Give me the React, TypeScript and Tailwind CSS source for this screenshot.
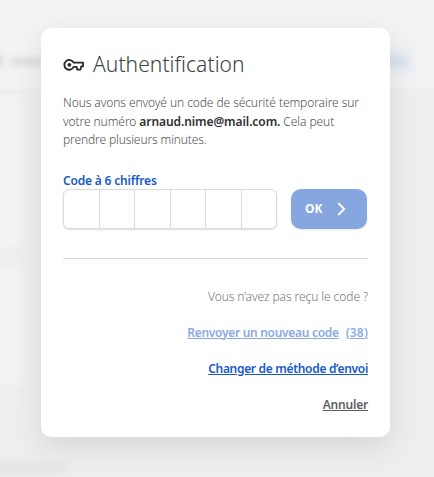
import type { ReactNode } from "react";

function KeyIcon() {
  return (
    <svg className="h-[14px] w-[21px] shrink-0" viewBox="0 0 21 14" fill="none" stroke="#292929" strokeWidth="1.8" strokeLinejoin="round">
      <path d="M10.6 4.6H20V8.4H18.2L17.5 11.6H14.2L13.7 8.9H10.7A4.9 4.9 0 1 1 10.6 4.6Z" />
      <circle cx="6.4" cy="6.8" r="1.9" fill="#292929" stroke="none" />
    </svg>
  );
}

function Backdrop() {
  return (
    <div className="absolute inset-0 overflow-hidden bg-[#eeeeee]">
      <div className="absolute inset-x-0 top-0 h-[89px] bg-[#f3f3f3]" />
      <div className="absolute -left-4 top-[95px] h-[152px] w-[37px] bg-[#f3f3f3] blur-[3px]" />
      <div className="absolute -left-4 top-[267px] h-[118px] w-[37px] bg-[#f3f3f3] blur-[3px]" />
      <div className="absolute -left-2 top-[55px] h-[12px] w-[10px] rounded-full bg-[#d4d4d4] blur-[3px]" />
      <div className="absolute left-[11px] top-[58px] h-[7px] w-[40px] bg-[#dadada] blur-[3px]" />
      <div className="absolute left-[365px] top-[46px] h-[30px] w-[50px] bg-[#eceff4] blur-[4px]" />
      <div className="absolute left-[376px] top-[58px] h-[7px] w-[32px] bg-[#cfdbee] blur-[4px]" />
      <div className="absolute -left-2 top-[464px] h-[7px] w-[74px] bg-[#e0e0e0] blur-[4px]" />
    </div>
  );
}

function Link({ className, children }: { className: string; children: ReactNode }) {
  return (
    <a href="#" className={`block whitespace-nowrap text-[12px] font-semibold leading-4 underline underline-offset-1 ${className}`}>
      {children}
    </a>
  );
}

export default function App() {
  return (
    <div className="relative h-[477px] w-[434px] overflow-hidden font-['Noto_Sans',sans-serif]">
      <Backdrop />
      <main className="relative ml-[41px] mt-[28px] h-[409px] w-[349px] rounded-[10px] bg-white px-[22px] pt-[22px] shadow-[0_10px_30px_rgba(0,0,0,0.10)]">
        <h1 className="flex h-[30px] items-center gap-[9px] whitespace-nowrap text-[21px] font-light tracking-[0.06px] text-[#404040]">
          <KeyIcon />
          <span>Authentification</span>
        </h1>
        <p className="mt-[14px] whitespace-nowrap text-[12px] font-light leading-[18.5px] tracking-[-0.08px] text-[#505050]">
          <span className="block">Nous avons envoyé un code de sécurité temporaire sur</span>
          <span className="block">votre numéro <b className="font-semibold text-[#303030]">arnaud.nime@mail.com.</b> Cela peut</span>
          <span className="block tracking-[-0.12px]">prendre plusieurs minutes.</span>
        </p>
        <div className="mt-[23px] flex items-end">
          <div>
            <label className="block whitespace-nowrap text-[12px] font-semibold leading-4 tracking-[-0.18px] text-[#1659c7]">Code à 6 chiffres</label>
            <div className="flex h-[40px] w-[214px] divide-x divide-[#d3dde0] rounded-[6px] border border-[#d3dde0] bg-white shadow-[0_1px_2px_rgba(0,0,0,0.12)]">
              <span className="flex-1" />
              <span className="flex-1" />
              <span className="flex-1" />
              <span className="flex-1" />
              <span className="flex-1" />
              <span className="flex-1" />
            </div>
          </div>
          <button className="ml-[14px] flex h-[40px] w-[76px] items-center rounded-[10px] bg-[#85a6df] pl-[14px] text-[12px] font-bold text-white shadow-[0_1px_2px_rgba(0,0,0,0.1)]">
            <span className="w-[17px]">OK</span>
            <svg className="ml-[15px] h-[14px] w-[9px]" viewBox="0 0 9 14" fill="none" stroke="white" strokeWidth="1.8">
              <path d="M1.3 1 7.2 7 1.3 13" />
            </svg>
          </button>
        </div>
        <hr className="mt-[29px] w-[305px] border-[#d0dde0]" />
        <div className="mt-[30px] flex flex-col items-end gap-[20px]">
          <p className="whitespace-nowrap text-[12px] font-light leading-4 tracking-[-0.07px] text-[#777777]">Vous n’avez pas reçu le code ?</p>
          <div className="flex gap-[7px]">
            <Link className="tracking-[-0.3px] text-[#8baae1]">Renvoyer un nouveau code</Link>
            <Link className="tracking-[0.2px] text-[#8baae1]">(38)</Link>
          </div>
          <Link className="tracking-[-0.31px] text-[#1659c7]">Changer de méthode d’envoi</Link>
          <Link className="tracking-[-0.2px] text-[#606060]">Annuler</Link>
        </div>
      </main>
    </div>
  );
}
